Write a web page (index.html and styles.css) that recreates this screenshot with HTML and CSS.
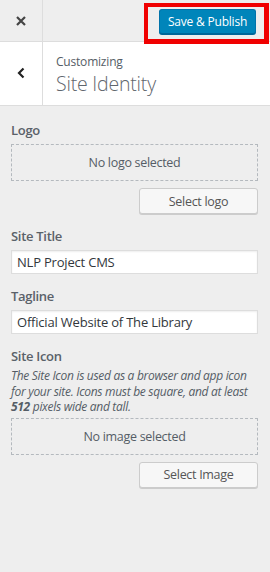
FILE: index.html
```html
<!DOCTYPE html>
<html lang="en">
<head>
    <meta charset="UTF-8">
    <meta name="viewport" content="width=device-width, initial-scale=1.0">
    <title>Customize: Site Identity</title>
    <link rel="stylesheet" href="styles.css">
</head>
<body>
    <!-- Top Bar -->
    <div class="top-bar">
        <button class="close-button" aria-label="Close">
            <svg width="10" height="10" viewBox="0 0 10 10">
                <path d="M1 1 L9 9 M9 1 L1 9" stroke="#444" stroke-width="2.2" fill="none"/>
            </svg>
        </button>
        <div class="top-spacer"></div>
        <button class="publish-button">Save &amp; Publish</button>
        <div class="highlight"></div>
    </div>

    <!-- Section Header -->
    <div class="section-head">
        <button class="back-button" aria-label="Back">
            <svg width="8" height="12" viewBox="0 0 8 12">
                <path d="M6.5 1.5 L2 6 L6.5 10.5" stroke="#222" stroke-width="2.2" fill="none"/>
            </svg>
        </button>
        <div class="section-title">
            <span class="title-small">Customizing</span>
            <span class="title-big">Site Identity</span>
        </div>
    </div>

    <!-- Controls -->
    <div class="controls">
        <div class="control">
            <div class="control-label">Logo</div>
            <div class="placeholder">No logo selected</div>
            <div class="button-row">
                <button class="wp-button">Select logo</button>
            </div>
        </div>

        <div class="control">
            <div class="control-label">Site Title</div>
            <input type="text" class="text-input" value="NLP Project CMS">
        </div>

        <div class="control">
            <div class="control-label">Tagline</div>
            <input type="text" class="text-input" value="Official Website of The Library">
        </div>

        <div class="control">
            <div class="control-label">Site Icon</div>
            <p class="description">The Site Icon is used as a browser and app icon for your site. Icons must be square, and at least <strong>512</strong> pixels wide and tall.</p>
            <div class="placeholder">No image selected</div>
            <div class="button-row">
                <button class="wp-button">Select Image</button>
            </div>
        </div>
    </div>
</body>
</html>
```

FILE: styles.css
```css
/* General Styles */
body {
    font-family: "Open Sans", "Noto Sans", sans-serif;
    margin: 0;
    background: #eeeeee;
    color: #555d66;
    min-height: 100vh;
}

button {
    font-family: inherit;
}

/* Top Bar */
.top-bar {
    position: relative;
    display: flex;
    align-items: center;
    height: 41px;
    border-bottom: 1px solid #dddddd;
    background: #eeeeee;
}

.close-button {
    width: 43px;
    height: 41px;
    border: none;
    border-right: 1px solid #dddddd;
    background: transparent;
    display: flex;
    align-items: center;
    justify-content: center;
    padding: 0;
}

.top-spacer {
    flex: 1;
}

.publish-button {
    width: 97px;
    height: 25px;
    margin-right: 14px;
    margin-top: 1px;
    padding: 0;
    background: #0085ba;
    border: 1px solid #0073aa;
    border-bottom-color: #006799;
    border-radius: 3px;
    box-shadow: 0 1px 0 #006799;
    color: #ffffff;
    font-size: 12px;
    letter-spacing: -0.2px;
}

/* Red annotation box drawn over the publish button */
.highlight {
    position: absolute;
    left: 144px;
    top: 3px;
    width: 116px;
    height: 32px;
    border: 4px solid #f00000;
    border-right-width: 5px;
    border-bottom-width: 5px;
}

/* Section Header */
.section-head {
    display: flex;
    height: 63px;
    border-bottom: 1px solid #dddddd;
    background: #ffffff;
}

.back-button {
    width: 43px;
    border: none;
    border-right: 1px solid #dddddd;
    background: #ffffff;
    display: flex;
    align-items: center;
    justify-content: center;
    padding: 0 0 2px 0;
}

.section-title {
    display: flex;
    flex-direction: column;
    padding: 11px 0 0 13px;
}

.title-small {
    font-size: 12px;
    line-height: 18px;
    letter-spacing: -0.2px;
}

.title-big {
    font-size: 19.5px;
    font-weight: 300;
    line-height: 26px;
    color: #5f666d;
    letter-spacing: -0.2px;
}

/* Controls */
.controls {
    padding: 14px 12px 0 11px;
}

.control {
    margin-bottom: 12px;
}

.control-label {
    font-size: 13px;
    font-weight: 600;
    line-height: 20px;
    margin-bottom: 4px;
    letter-spacing: -0.3px;
    color: #5a6169;
}

.placeholder {
    height: 35px;
    border: 1px dashed #b4b9be;
    display: flex;
    align-items: center;
    justify-content: center;
    font-size: 12.5px;
    letter-spacing: -0.3px;
    color: #555d66;
}

.button-row {
    display: flex;
    justify-content: flex-end;
    margin-top: 7px;
}

.wp-button {
    width: 119px;
    height: 26px;
    padding: 0;
    background: #f7f7f7;
    border: 1px solid #cccccc;
    border-radius: 3px;
    box-shadow: 0 1px 0 #cccccc;
    color: #555555;
    font-size: 12.5px;
    letter-spacing: -0.3px;
}

.text-input {
    display: block;
    box-sizing: border-box;
    width: 100%;
    height: 24px;
    margin: 0;
    padding: 0 5px;
    border: 1px solid #dddddd;
    background: #ffffff;
    box-shadow: inset 0 1px 2px rgba(0, 0, 0, 0.07);
    font-family: inherit;
    font-size: 13px;
    letter-spacing: -0.2px;
    color: #32373c;
}

.description {
    margin: -2px 0 3px 0;
    font-size: 12px;
    font-style: italic;
    line-height: 15.5px;
    letter-spacing: -0.3px;
}

.description strong {
    font-weight: 700;
}
```
